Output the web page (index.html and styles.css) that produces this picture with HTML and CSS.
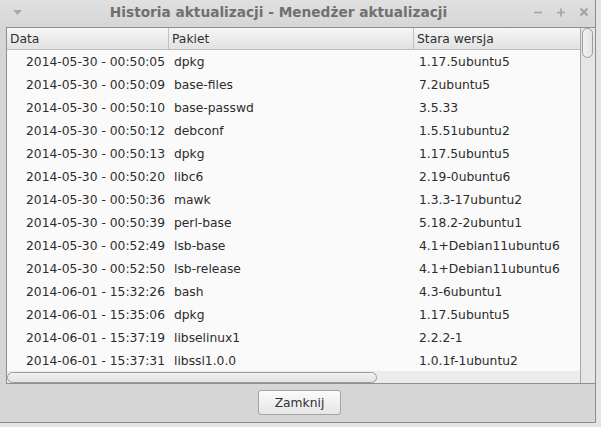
FILE: index.html
```html
<!DOCTYPE html>
<html lang="pl">
<head>
<meta charset="utf-8">
<title>Historia aktualizacji</title>
<link rel="stylesheet" href="styles.css">
</head>
<body>
<div class="window">
  <div class="titlebar">
    <svg class="menu-arrow" width="9" height="6" viewBox="0 0 9 6"><path d="M0 0 H9 L4.5 5 Z" fill="#a9a9a9"/></svg>
    <div class="title">Historia aktualizacji - Menedżer aktualizacji</div>
    <div class="controls">
      <svg width="10" height="10" viewBox="0 0 10 10"><path d="M1 5.5 H9" stroke="#a3a3a3" stroke-width="1.6"/></svg>
      <svg width="10" height="10" viewBox="0 0 10 10"><path d="M1 5.5 H9 M5 1.5 V9.5" stroke="#a3a3a3" stroke-width="1.6"/></svg>
      <svg width="10" height="10" viewBox="0 0 10 10"><path d="M1.5 1.5 L8.5 8.5 M8.5 1.5 L1.5 8.5" stroke="#a3a3a3" stroke-width="2"/></svg>
    </div>
  </div>
  <div class="frame">
    <div class="view">
      <div class="table">
        <div class="head">
          <div class="hc c1">Data</div>
          <div class="hc c2">Pakiet</div>
          <div class="hc c3">Stara wersja</div>
        </div>
        <div class="rows">
          <div class="row"><div class="c1 date">2014-05-30 - 00:50:05</div><div class="c2">dpkg</div><div class="c3">1.17.5ubuntu5</div></div>
          <div class="row"><div class="c1 date">2014-05-30 - 00:50:09</div><div class="c2">base-files</div><div class="c3">7.2ubuntu5</div></div>
          <div class="row"><div class="c1 date">2014-05-30 - 00:50:10</div><div class="c2">base-passwd</div><div class="c3">3.5.33</div></div>
          <div class="row"><div class="c1 date">2014-05-30 - 00:50:12</div><div class="c2">debconf</div><div class="c3">1.5.51ubuntu2</div></div>
          <div class="row"><div class="c1 date">2014-05-30 - 00:50:13</div><div class="c2">dpkg</div><div class="c3">1.17.5ubuntu5</div></div>
          <div class="row"><div class="c1 date">2014-05-30 - 00:50:20</div><div class="c2">libc6</div><div class="c3">2.19-0ubuntu6</div></div>
          <div class="row"><div class="c1 date">2014-05-30 - 00:50:36</div><div class="c2">mawk</div><div class="c3">1.3.3-17ubuntu2</div></div>
          <div class="row"><div class="c1 date">2014-05-30 - 00:50:39</div><div class="c2">perl-base</div><div class="c3">5.18.2-2ubuntu1</div></div>
          <div class="row"><div class="c1 date">2014-05-30 - 00:52:49</div><div class="c2">lsb-base</div><div class="c3">4.1+Debian11ubuntu6</div></div>
          <div class="row"><div class="c1 date">2014-05-30 - 00:52:50</div><div class="c2">lsb-release</div><div class="c3">4.1+Debian11ubuntu6</div></div>
          <div class="row"><div class="c1 date">2014-06-01 - 15:32:26</div><div class="c2">bash</div><div class="c3">4.3-6ubuntu1</div></div>
          <div class="row"><div class="c1 date">2014-06-01 - 15:35:06</div><div class="c2">dpkg</div><div class="c3">1.17.5ubuntu5</div></div>
          <div class="row"><div class="c1 date">2014-06-01 - 15:37:19</div><div class="c2">libselinux1</div><div class="c3">2.2.2-1</div></div>
          <div class="row"><div class="c1 date">2014-06-01 - 15:37:31</div><div class="c2">libssl1.0.0</div><div class="c3">1.0.1f-1ubuntu2</div></div>
        </div>
        <div class="hscroll"><div class="hthumb"></div></div>
      </div>
      <div class="vscroll"><div class="vthumb"></div></div>
    </div>
  </div>
  <div class="actions">
    <button class="btn">Zamknij</button>
  </div>
</div>
</body>
</html>
```
FILE: styles.css
```css
html, body {
  margin: 0;
  padding: 0;
}
body {
  width: 601px;
  height: 427px;
  overflow: hidden;
  background: #e4e4e4;
  font-family: "DejaVu Sans", "Liberation Sans", sans-serif;
}
.window {
  width: 595px;
  height: 422px;
  background: #d6d6d6;
  border-right: 1px solid #8c8c8c;
  border-bottom: 1px solid #8c8c8c;
  display: flex;
  flex-direction: column;
  border-top-left-radius: 4px;
}
.titlebar {
  height: 27px;
  display: flex;
  align-items: center;
  position: relative;
  background: linear-gradient(#e0e0e0, #d6d6d6);
  border-top-left-radius: 4px;
}
.menu-arrow {
  margin-left: 13px;
  margin-top: -2px;
}
.title {
  flex: 1;
  text-align: center;
  font-weight: bold;
  font-size: 13.7px;
  color: #707070;
  margin-top: -4px;
  margin-left: 2px;
}
.controls {
  display: flex;
  gap: 13px;
  margin-right: 6px;
  margin-top: -3px;
}
.frame {
  margin-left: 6px;
  border: 1px solid #8f8f8f;
  border-right: none;
  background: #fafafa;
}
.view {
  display: flex;
  height: 355px;
}
.table {
  flex: 1;
  display: flex;
  flex-direction: column;
  min-width: 0;
}
.head {
  height: 21px;
  display: flex;
  background: linear-gradient(#f6f6f6, #e2e2e2);
  border-bottom: 1px solid #bdbdbd;
  font-size: 12.3px;
  color: #303030;
}
.hc {
  display: flex;
  align-items: center;
  padding-left: 3px;
  box-sizing: border-box;
}
.head .c1, .head .c2 {
  border-right: 1px solid #c2c2c2;
}
.c1 { width: 162px; flex: none; }
.c2 { width: 245px; flex: none; }
.c3 { flex: 1; }
.rows {
  height: 321px;
  overflow: hidden;
  font-size: 12.3px;
  color: #2c2c2c;
}
.row {
  height: 23px;
  display: flex;
  align-items: center;
}
.row .c1 {
  text-align: right;
  padding-right: 4px;
  box-sizing: border-box;
}
.row .c2 {
  padding-left: 5px;
  box-sizing: border-box;
}
.row .c3 {
  padding-left: 5px;
}
.hscroll {
  height: 12px;
  background: #ececec;
  position: relative;
}
.hthumb {
  width: 368px;
  height: 9px;
  margin-top: 1px;
  border: 1px solid #9c9c9c;
  border-radius: 6px;
  background: linear-gradient(#f2f2f2, #e2e2e2);
}
.vscroll {
  width: 14px;
  border-left: 1px solid #a6a6a6;
  background: #e6e6e6;
}
.vthumb {
  width: 9px;
  height: 28px;
  margin: 0 0 0 1px;
  border: 1px solid #9c9c9c;
  border-radius: 6px;
  background: linear-gradient(90deg, #f2f2f2, #e4e4e4);
}
.actions {
  flex: 1;
  display: flex;
  justify-content: center;
  align-items: center;
}
.btn {
  width: 83px;
  height: 25px;
  margin-top: -1px;
  margin-left: 4px;
  font-family: "DejaVu Sans", "Liberation Sans", sans-serif;
  font-size: 12.3px;
  color: #303030;
  background: linear-gradient(#fbfbfb, #e6e6e6);
  border: 1px solid #a4a4a4;
  border-radius: 3px;
  padding: 0;
}
```
